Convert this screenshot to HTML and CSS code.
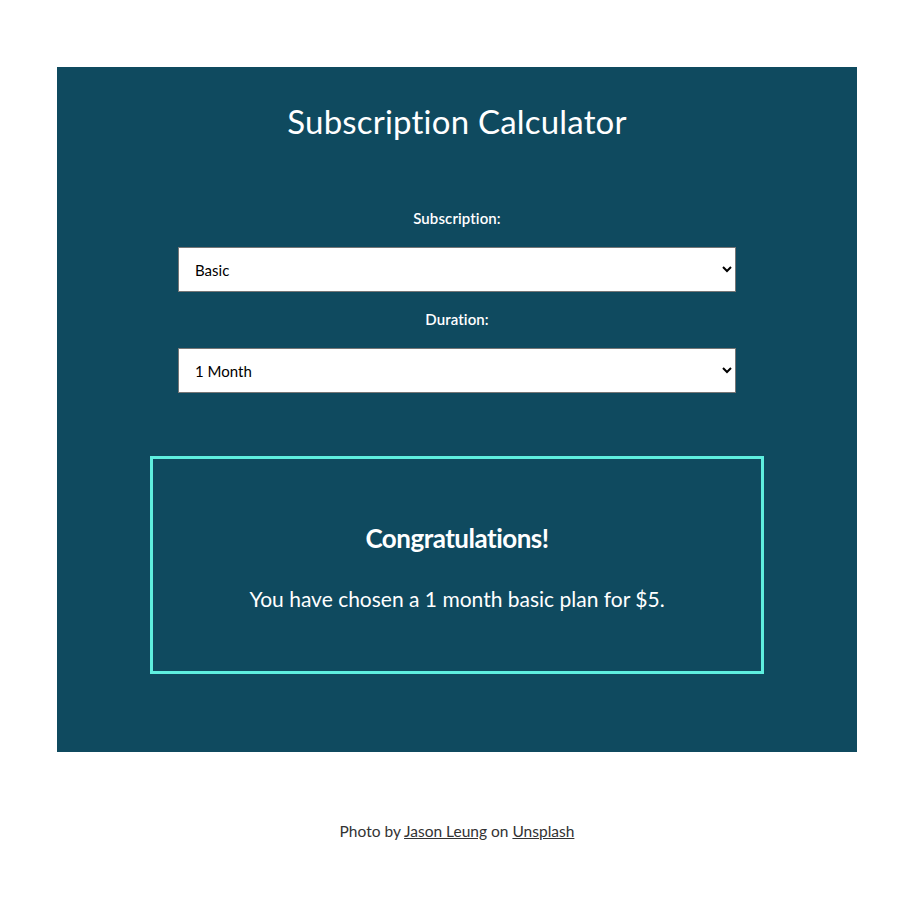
FILE: index.html
```html
<!DOCTYPE html>
<html lang="en">
<head>
<meta charset="utf-8">
<title>Subscription Calculator</title>
<link rel="stylesheet" href="styles.css">
</head>
<body>
<main class="panel">
  <h1 class="title">Subscription Calculator</h1>
  <form class="form">
    <label class="label" for="sub">Subscription:</label>
    <select class="select" id="sub">
      <option>Basic</option>
      <option>Premium</option>
    </select>
    <label class="label" for="dur">Duration:</label>
    <select class="select" id="dur">
      <option>1 Month</option>
      <option>6 Months</option>
      <option>12 Months</option>
    </select>
  </form>
  <section class="result">
    <h2 class="result-title">Congratulations!</h2>
    <p class="result-text">You have chosen a 1 month basic plan for $5.</p>
  </section>
</main>
<footer class="footer">
  Photo by <a href="#">Jason Leung</a> on <a href="#">Unsplash</a>
</footer>
</body>
</html>
```

FILE: styles.css
```css
html, body {
  margin: 0;
  padding: 0;
  background: #ffffff;
}

body {
  font-family: Lato, "Open Sans", sans-serif;
}

.panel {
  width: 800px;
  margin: 67px auto 0;
  padding: 34px 0 78px;
  background: #0f4a5f;
  color: #ffffff;
  display: flex;
  flex-direction: column;
  align-items: center;
  box-sizing: border-box;
}

.title {
  margin: 0;
  font-family: Lato, sans-serif;
  font-weight: 400;
  font-size: 33px;
  line-height: 40px;
  letter-spacing: 0.2px;
}

.form {
  margin-top: 67px;
  width: 558px;
  display: flex;
  flex-direction: column;
  align-items: center;
}

.label {
  font-size: 15px;
  line-height: 20px;
  font-weight: 600;
  letter-spacing: 0.1px;
  margin-bottom: 19px;
}

.select {
  width: 558px;
  height: 45px;
  box-sizing: border-box;
  border: 1px solid #767676;
  border-radius: 0;
  background-color: #ffffff;
  padding: 0 10px 0 12px;
  font-family: Lato, sans-serif;
  font-size: 15px;
  color: #000000;
  margin-bottom: 17px;
}

.select:last-child {
  margin-bottom: 0;
}

.result {
  margin-top: 63px;
  width: 614px;
  height: 218px;
  box-sizing: border-box;
  border: 3px solid #5eefdf;
  display: flex;
  flex-direction: column;
  align-items: center;
  justify-content: center;
  padding-top: 5px;
}

.result-title {
  margin: 0;
  font-size: 26px;
  line-height: 32px;
  font-weight: 700;
  letter-spacing: -0.5px;
}

.result-text {
  margin: 31px 0 0;
  font-size: 21px;
  line-height: 28px;
}

.footer {
  margin-top: 69px;
  text-align: center;
  font-size: 15.5px;
  line-height: 20px;
  color: #333333;
  padding-bottom: 40px;
}

.footer a {
  color: #333333;
  text-decoration: underline;
}
```
